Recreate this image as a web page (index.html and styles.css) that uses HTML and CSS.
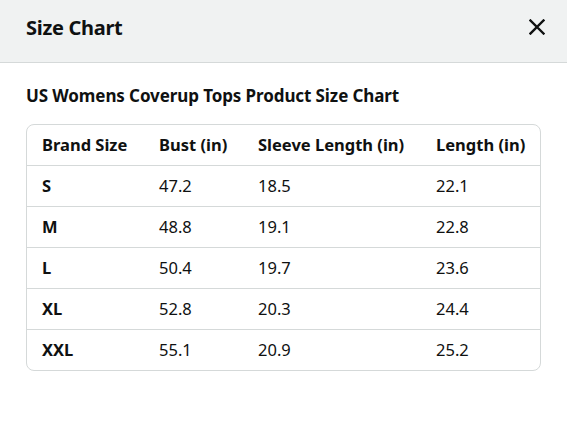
FILE: index.html
```html
<!DOCTYPE html>
<html>
<head>
<meta charset="utf-8">
<link rel="stylesheet" href="styles.css">
</head>
<body>
<div class="modal">
  <header class="modal-header">
    <h1 class="modal-title">Size Chart</h1>
    <button class="close-btn" aria-label="Close">
      <svg width="16" height="16" viewBox="0 0 16 16"><path d="M1.5 1.5 L14.5 14.5 M14.5 1.5 L1.5 14.5" stroke="#0f1111" stroke-width="2.4" stroke-linecap="square" fill="none"/></svg>
    </button>
  </header>
  <section class="modal-body">
    <h2 class="chart-title">US Womens Coverup Tops Product Size Chart</h2>
    <div class="table-wrap">
      <table class="size-table">
        <colgroup><col class="c1"><col class="c2"><col class="c3"><col class="c4"></colgroup>
        <thead>
          <tr><th>Brand Size</th><th>Bust (in)</th><th>Sleeve Length (in)</th><th>Length (in)</th></tr>
        </thead>
        <tbody>
          <tr><th>S</th><td>47.2</td><td>18.5</td><td>22.1</td></tr>
          <tr><th>M</th><td>48.8</td><td>19.1</td><td>22.8</td></tr>
          <tr><th>L</th><td>50.4</td><td>19.7</td><td>23.6</td></tr>
          <tr><th>XL</th><td>52.8</td><td>20.3</td><td>24.4</td></tr>
          <tr><th>XXL</th><td>55.1</td><td>20.9</td><td>25.2</td></tr>
        </tbody>
      </table>
    </div>
  </section>
</div>
</body>
</html>
```
FILE: styles.css
```css
html, body {
  margin: 0;
  padding: 0;
  background: #ffffff;
}
body {
  font-family: "Noto Sans", "Open Sans", Arial, sans-serif;
  color: #0f1111;
  width: 567px;
  height: 424px;
  overflow: hidden;
}
.modal {
  display: flex;
  flex-direction: column;
}
.modal-header {
  height: 62px;
  background: #f0f2f2;
  border-bottom: 1px solid #d5d9d9;
  display: flex;
  align-items: center;
  justify-content: space-between;
  padding: 0 20px 0 26px;
}
.modal-title {
  margin: 0;
  font-size: 20px;
  font-weight: 700;
  letter-spacing: -0.3px;
  position: relative;
  top: -4px;
}
.close-btn {
  border: 0;
  background: transparent;
  padding: 0;
  width: 20px;
  height: 20px;
  display: flex;
  align-items: center;
  justify-content: center;
  position: relative;
  top: -4px;
}
.modal-body {
  padding: 22px 26px 0 26px;
}
.chart-title {
  margin: 0 0 17px 0;
  font-size: 17px;
  font-weight: 700;
  line-height: 22px;
  letter-spacing: -0.1px;
}
.table-wrap {
  border: 1px solid #d5d9d9;
  border-radius: 8px;
  overflow: hidden;
  width: 513px;
}
.size-table {
  border-collapse: collapse;
  width: 100%;
  table-layout: fixed;
  font-size: 16.5px;
}
.size-table th, .size-table td {
  text-align: left;
  padding: 0 0 0 15px;
  height: 40px;
  line-height: 20px;
  vertical-align: middle;
  white-space: nowrap;
}
.size-table th {
  font-weight: 700;
}
.size-table td {
  font-weight: 400;
}
.size-table tbody tr {
  border-top: 1px solid #d5d9d9;
}
.c1 { width: 117px; }
.c2 { width: 99px; }
.c3 { width: 178px; }
.c4 { width: auto; }
```
